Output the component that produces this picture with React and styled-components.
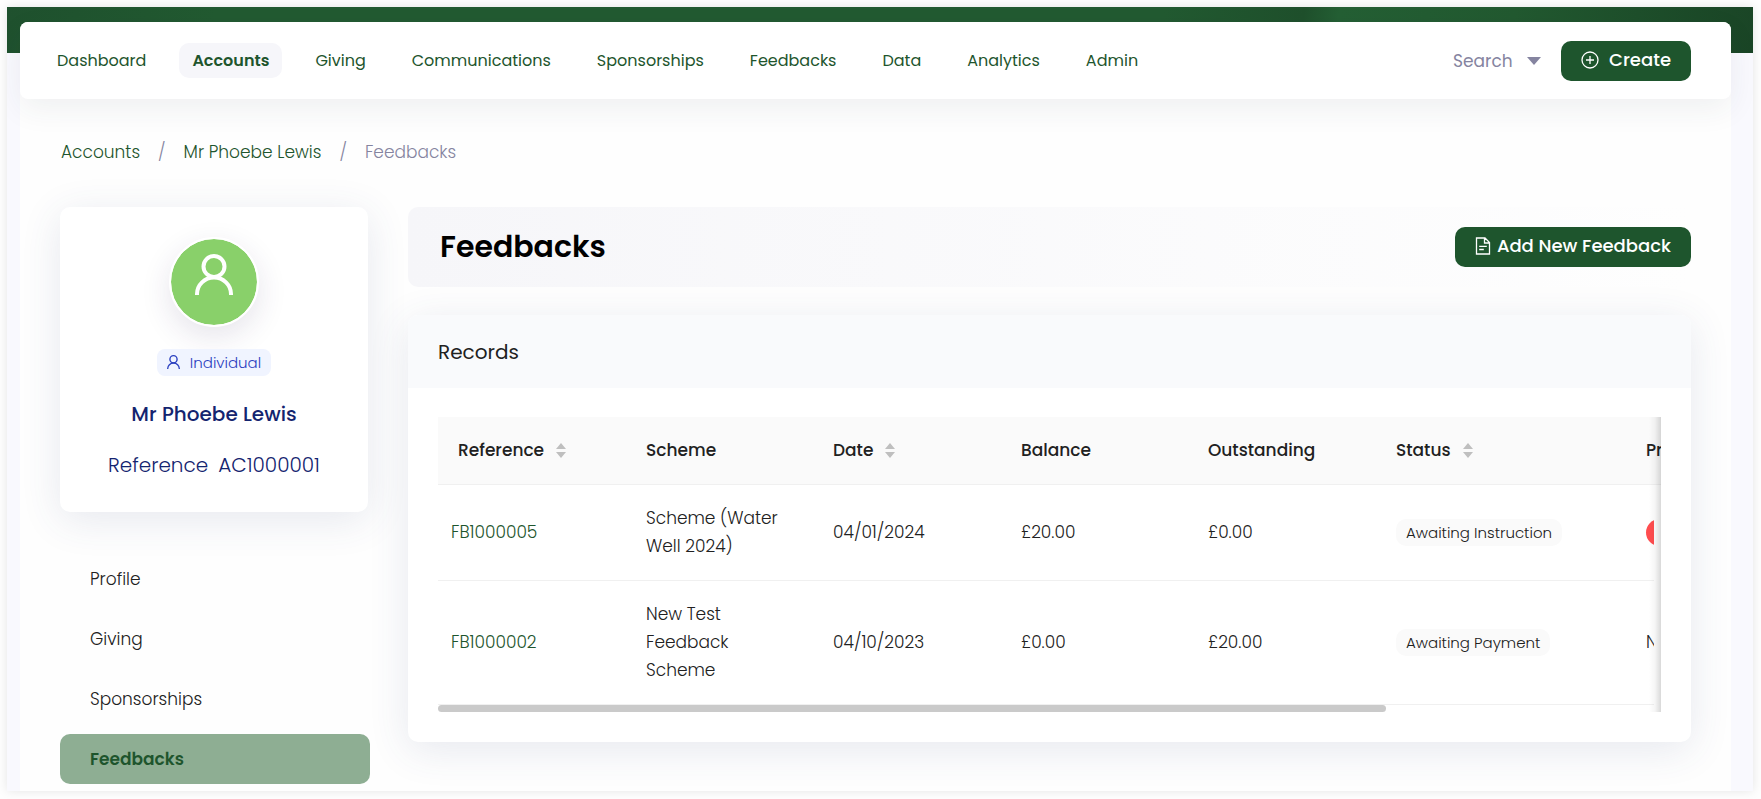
import React from "react";
import styled, { createGlobalStyle } from "styled-components";

const green = "#1e552d";

const GlobalStyle = createGlobalStyle`
  *, *::before, *::after { box-sizing: border-box; }
  body {
    margin: 0;
    background: #fefefe;
    color: #212121;
    font-family: Poppins, Inter, "Open Sans", sans-serif;
    font-size: 17px;
    font-weight: 300;
    line-height: 28px;
  }
  a { color: inherit; text-decoration: none; }
  button, select { font: inherit; color: inherit; border: 0; cursor: pointer; }
  h1, h2, p, ul, ol { margin: 0; padding: 0; }
  ul, ol { list-style: none; }
`;

const Shadow = styled.div`
  margin: 7px 8px 8px 7px;
  box-shadow: 0 0 10px rgba(0, 0, 0, 0.1);
`;

const Frame = styled.div`
  padding: 15px 22px 0 13px;
  overflow: hidden;
  background: linear-gradient(100deg, #1f512e 0%, #225a31 12%, #225a31 66%, #1f502c 74%, #245f34 76%, #225930 86%, #1a4526 100%) no-repeat 0 0 / 100% 46px, #f9f9fe;
`;

const Panel = styled.div`
  background: #fefefe;
  border-radius: 8px 8px 0 0;
  padding-bottom: 7px;
`;

const Header = styled.header`
  display: flex;
  align-items: center;
  justify-content: space-between;
  height: 77px;
  padding: 0 40px 0 24px;
  background: #fff;
  border-radius: 8px;
  box-shadow: 0 10px 30px rgba(40, 50, 70, 0.07);
`;

const Nav = styled.nav`
  display: flex;
  gap: 20px;
`;

const NavLink = styled.a`
  padding: 4px 13px;
  line-height: 27px;
  border-radius: 10px;
  color: ${green};
  font-size: 16px;
  font-weight: ${(p) => (p.$active ? 600 : 400)};
  background: ${(p) => (p.$active ? "#f6f6fa" : "transparent")};
`;

const Tools = styled.div`
  display: flex;
  align-items: center;
  gap: 20px;
`;

const SearchBox = styled.div`
  display: flex;
  align-items: center;
  gap: 14px;
  color: #8584a0;
  font-size: 17px;
  font-weight: 400;
`;

const SearchSelect = styled.select`
  appearance: none;
  padding: 0;
  background: none;
`;

const Button = styled.button`
  display: flex;
  align-items: center;
  gap: ${(p) => p.$gap}px;
  height: 40px;
  padding: 0 20px 2px;
  border-radius: 10px;
  background: ${green};
  color: #fff;
  font-size: 18px;
  font-weight: 500;
`;

const Crumbs = styled.ol`
  display: flex;
  gap: 18px;
  padding: 39px 41px 0;
  color: ${green};
`;

const Crumb = styled.li`
  display: flex;
  gap: 18px;
  color: ${(p) => (p.$current ? "#8584a0" : "inherit")};
  &:not(:first-child)::before { content: "/"; color: #8584a0; }
`;

const Layout = styled.div`
  display: grid;
  grid-template-columns: 308px minmax(0, 1fr);
  gap: 40px;
  padding: 41px 40px 0;
`;

const Card = styled.section`
  background: #fff;
  border-radius: 10px;
  box-shadow: 0 8px 40px rgba(60, 70, 120, 0.12);
`;

const ProfileCard = styled(Card)`
  display: flex;
  flex-direction: column;
  align-items: center;
  height: 305px;
  padding-top: 30px;
  color: #14246f;
  font-size: 20px;
`;

const Avatar = styled.div`
  display: flex;
  justify-content: center;
  align-items: flex-start;
  width: 90px;
  height: 90px;
  padding-top: 15px;
  border: 2px solid #fff;
  border-radius: 50%;
  background: #89d06a;
  background-clip: padding-box;
  color: #fff;
  box-shadow: 0 10px 30px rgba(50, 30, 90, 0.12);
`;

const Kind = styled.p`
  display: flex;
  align-items: center;
  gap: 10px;
  margin-top: 22px;
  padding: 0 10px;
  line-height: 27px;
  border-radius: 8px;
  background: #f0f4ff;
  color: #2b40c0;
  font-size: 15px;
`;

const Name = styled.h2`
  margin-top: 24px;
  font-size: 20px;
  font-weight: 500;
`;

const Reference = styled.p`
  display: flex;
  gap: 10px;
  margin-top: 23px;
`;

const Menu = styled.ul`
  display: grid;
  gap: 10px;
  margin: 42px -2px 0 0;
`;

const MenuLink = styled.a`
  display: block;
  padding: 11px 30px;
  border-radius: 10px;
  background: ${(p) => (p.$active ? "#8eae93" : "transparent")};
  color: ${(p) => (p.$active ? green : "inherit")};
  font-weight: ${(p) => (p.$active ? 600 : 300)};
`;

const TitleBar = styled.div`
  display: flex;
  align-items: center;
  justify-content: space-between;
  height: 80px;
  padding-left: 32px;
  border-radius: 10px;
  background: linear-gradient(90deg, #f6f6f9, #fefefe);
`;

const Title = styled.h1`
  color: #000;
  font-size: 30px;
  font-weight: 600;
`;

const Records = styled(Card)`
  margin-top: 28px;
`;

const RecordsTitle = styled.h2`
  padding: 23px 30px 22px;
  border-radius: 10px 10px 0 0;
  background: #f9fafc;
  font-size: 20px;
  font-weight: 400;
`;

const TableArea = styled.div`
  position: relative;
  margin: 0 30px;
  padding-top: 29px;
`;

const Scroller = styled.div`
  overflow-x: auto;
  scrollbar-width: none;
`;

const Table = styled.table`
  width: 129%;
  table-layout: fixed;
  border-collapse: separate;
  border-spacing: 0;
`;

const Col = styled.col`
  width: ${(p) => (p.$width ? p.$width + "px" : "auto")};
`;

const Th = styled.th`
  padding: 19px 20px 20px;
  border-bottom: 1px solid #f0f0f0;
  background: #fafafa;
  font-weight: 500;
  text-align: left;
`;

const SortLabel = styled.span`
  display: flex;
  align-items: center;
  gap: 12px;
`;

const Td = styled.td`
  padding: 19px 20px 20px ${(p) => (p.$link ? 13 : 20)}px;
  border-bottom: 1px solid #f0f0f0;
  color: ${(p) => (p.$link ? green : "inherit")};
`;

const Tag = styled.span`
  display: inline-block;
  padding: 0 10px;
  border-radius: ${(p) => (p.$alert ? 14 : 10)}px;
  background: ${(p) => (p.$alert ? "#ff4d4f" : "#fafafa")};
  color: ${(p) => (p.$alert ? "#fff" : "inherit")};
  font-size: 15px;
  line-height: 27px;
`;

const Gutter = styled.div`
  position: absolute;
  top: 97px;
  right: 0;
  bottom: 0;
  width: 7px;
  background: #fff;
`;

const EdgeShade = styled.div`
  position: absolute;
  top: 29px;
  right: 0;
  bottom: 0;
  width: 12px;
  background: linear-gradient(90deg, rgba(0, 0, 0, 0), rgba(0, 0, 0, 0.04) 50%, rgba(0, 0, 0, 0.15));
`;

const Thumb = styled.div`
  width: 77.5%;
  height: 7px;
  border-radius: 4px;
  background: #cacaca;
`;

const CardFoot = styled.div`
  height: 30px;
`;

function PersonIcon({ width, stroke }) {
  return (
    <svg width={width} viewBox="0 0 38 42" fill="none" stroke="currentColor" strokeWidth={stroke} aria-hidden="true">
      <circle cx="19" cy="12.500" r="10.500" />
      <path d="M2 41v-1a17 16.500 0 0 1 34 0v1" />
    </svg>
  );
}

function PlusCircle() {
  return (
    <svg width="18" height="18" viewBox="0 0 18 18" fill="none" stroke="currentColor" strokeWidth="1.300" aria-hidden="true">
      <circle cx="9" cy="9" r="8" />
      <path d="M9 5v8M5 9h8" />
    </svg>
  );
}

function FileIcon() {
  return (
    <svg width="16" height="18" viewBox="0 0 16 18" fill="none" stroke="currentColor" strokeWidth="1.300" aria-hidden="true">
      <path d="M1.500 1h8.500l4.500 4.500v11.500h-13zM9.500 1v5h5M4.200 9.300h7.600M4.200 12.500h4.600" />
    </svg>
  );
}

function SortIcon() {
  return (
    <svg width="10" height="15" viewBox="0 0 10 15" fill="#bfbfbf" aria-hidden="true">
      <path d="M5 0l5 6H0zM5 15l5-6H0z" />
    </svg>
  );
}

const navItems = ["Dashboard", "Accounts", "Giving", "Communications", "Sponsorships", "Feedbacks", "Data", "Analytics", "Admin"];
const menuItems = ["Profile", "Giving", "Sponsorships", "Feedbacks"];
const columns = [
  { label: "Reference", width: 188, sort: true },
  { label: "Scheme", width: 187 },
  { label: "Date", width: 188, sort: true },
  { label: "Balance", width: 187 },
  { label: "Outstanding", width: 188 },
  { label: "Status", width: 250, sort: true },
  { label: "Printed" },
];
const rows = [
  { ref: "FB1000005", scheme: "Scheme (Water Well 2024)", date: "04/01/2024", balance: "£20.00", outstanding: "£0.00", status: "Awaiting Instruction", alert: true },
  { ref: "FB1000002", scheme: "New Test Feedback Scheme", date: "04/10/2023", balance: "£0.00", outstanding: "£20.00", status: "Awaiting Payment" },
];

export default function App() {
  return (
    <>
      <GlobalStyle />
      <Shadow>
        <Frame>
          <Panel>
            <Header>
              <Nav aria-label="Main">
                {navItems.map((item) => (
                  <NavLink key={item} href="#" $active={item === "Accounts"}>{item}</NavLink>
                ))}
              </Nav>
              <Tools>
                <SearchBox>
                  <SearchSelect aria-label="Search" defaultValue="Search">
                    <option>Search</option>
                  </SearchSelect>
                  <svg width="14" height="8" viewBox="0 0 14 8" fill="currentColor" aria-hidden="true">
                    <path d="M0 0h14L7 8z" />
                  </svg>
                </SearchBox>
                <Button type="button" $gap={10}><PlusCircle />Create</Button>
              </Tools>
            </Header>
            <nav aria-label="Breadcrumb">
              <Crumbs>
                <Crumb><a href="#">Accounts</a></Crumb>
                <Crumb><a href="#">Mr Phoebe Lewis</a></Crumb>
                <Crumb $current>Feedbacks</Crumb>
              </Crumbs>
            </nav>
            <Layout>
              <aside>
                <ProfileCard>
                  <Avatar><PersonIcon width={38} stroke={4} /></Avatar>
                  <Kind><PersonIcon width={13} stroke={4} />Individual</Kind>
                  <Name>Mr Phoebe Lewis</Name>
                  <Reference><span>Reference</span><span>AC1000001</span></Reference>
                </ProfileCard>
                <Menu>
                  {menuItems.map((item) => (
                    <li key={item}><MenuLink href="#" $active={item === "Feedbacks"}>{item}</MenuLink></li>
                  ))}
                </Menu>
              </aside>
              <main>
                <TitleBar>
                  <Title>Feedbacks</Title>
                  <Button type="button" $gap={6}><FileIcon />Add New Feedback</Button>
                </TitleBar>
                <Records>
                  <RecordsTitle>Records</RecordsTitle>
                  <TableArea>
                    <Scroller>
                      <Table>
                        <colgroup>
                          {columns.map((c) => <Col key={c.label} $width={c.width} />)}
                        </colgroup>
                        <thead>
                          <tr>
                            {columns.map((c) => (
                              <Th key={c.label} scope="col">
                                {c.sort ? <SortLabel>{c.label}<SortIcon /></SortLabel> : c.label}
                              </Th>
                            ))}
                          </tr>
                        </thead>
                        <tbody>
                          {rows.map((r) => (
                            <tr key={r.ref}>
                              <Td $link><a href="#">{r.ref}</a></Td>
                              <Td>{r.scheme}</Td>
                              <Td>{r.date}</Td>
                              <Td>{r.balance}</Td>
                              <Td>{r.outstanding}</Td>
                              <Td><Tag>{r.status}</Tag></Td>
                              <Td>{r.alert ? <Tag $alert>Yes</Tag> : "No"}</Td>
                            </tr>
                          ))}
                        </tbody>
                      </Table>
                    </Scroller>
                    <Thumb />
                    <Gutter />
                    <EdgeShade />
                  </TableArea>
                  <CardFoot />
                </Records>
              </main>
            </Layout>
          </Panel>
        </Frame>
      </Shadow>
    </>
  );
}
